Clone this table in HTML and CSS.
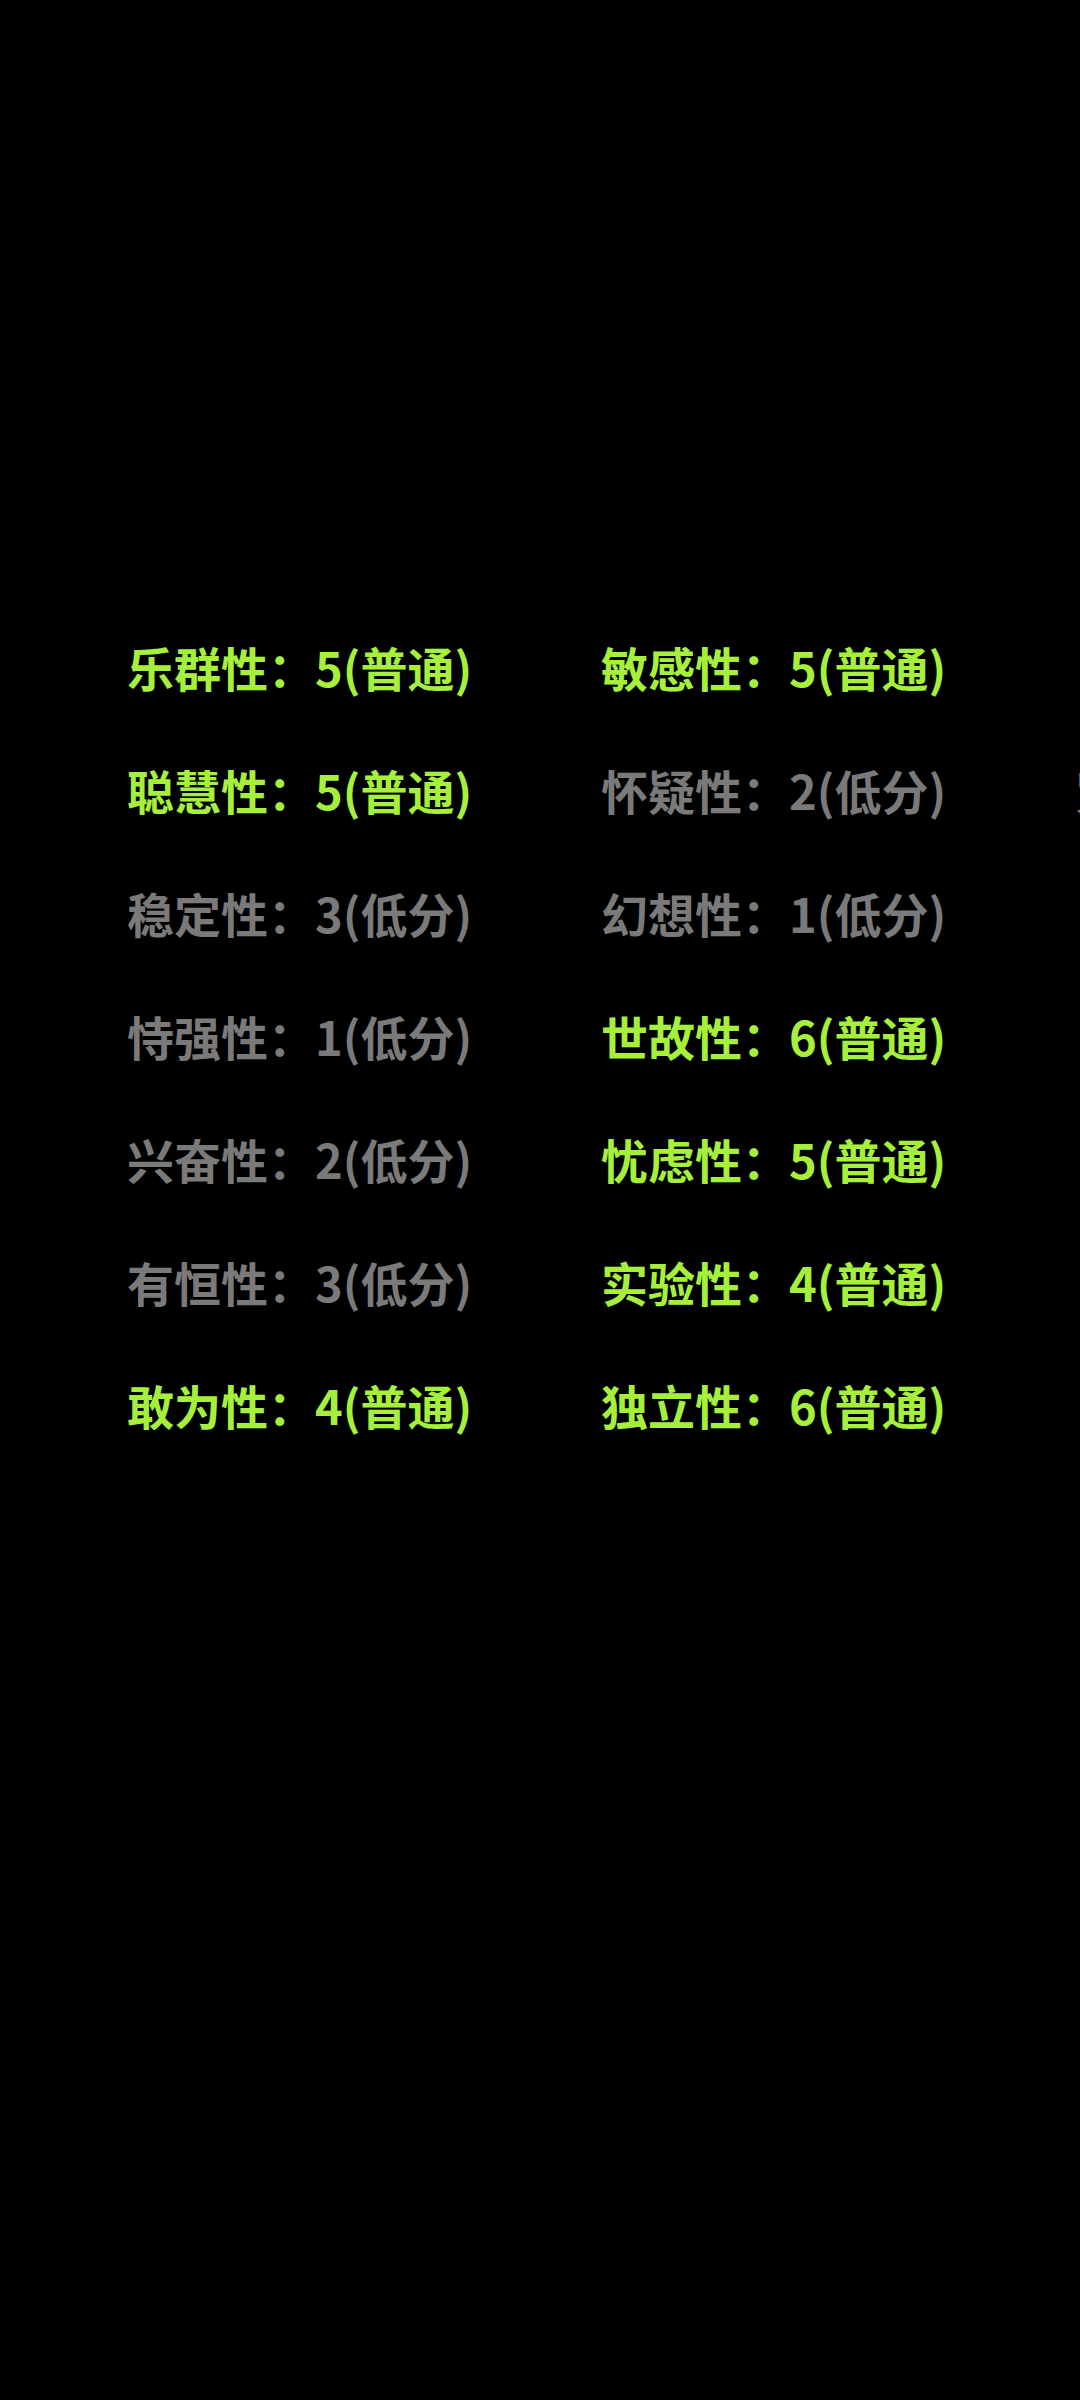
FILE: index.html
```html
<!DOCTYPE html>
<html lang="zh-CN">
<head>
    <meta charset="UTF-8">
    <meta name="viewport" content="width=device-width, initial-scale=1.0">
    <title>16PF 结果</title>
    <link rel="stylesheet" href="styles.css">
</head>
<body>
    <div class="result-grid">
        <div class="factor-column">
            <div class="factor normal">乐群性：5(普通)</div>
            <div class="factor normal">聪慧性：5(普通)</div>
            <div class="factor low">稳定性：3(低分)</div>
            <div class="factor low">恃强性：1(低分)</div>
            <div class="factor low">兴奋性：2(低分)</div>
            <div class="factor low">有恒性：3(低分)</div>
            <div class="factor normal">敢为性：4(普通)</div>
        </div>
        <div class="factor-column">
            <div class="factor normal">敏感性：5(普通)</div>
            <div class="factor low">怀疑性：2(低分)</div>
            <div class="factor low">幻想性：1(低分)</div>
            <div class="factor normal">世故性：6(普通)</div>
            <div class="factor normal">忧虑性：5(普通)</div>
            <div class="factor normal">实验性：4(普通)</div>
            <div class="factor normal">独立性：6(普通)</div>
        </div>
        <div class="factor-column">
            <div class="factor low">自律性：3(低分)</div>
            <div class="factor low">紧张性：2(低分)</div>
        </div>
    </div>
</body>
</html>
```

FILE: styles.css
```css
html, body {
    margin: 0;
    padding: 0;
    background-color: #000;
}
body {
    width: 1080px;
    height: 2400px;
    overflow: hidden;
    font-family: "Noto Sans CJK SC", "Noto Sans", sans-serif;
}
.result-grid {
    display: grid;
    grid-template-columns: 474px 474px 474px;
    padding: 605px 0 0 127px;
}
.factor {
    font-size: 47px;
    font-weight: bold;
    line-height: 123px;
    white-space: nowrap;
}
.normal {
    color: #a6f03c;
}
.low {
    color: #7a7a7a;
}
```
